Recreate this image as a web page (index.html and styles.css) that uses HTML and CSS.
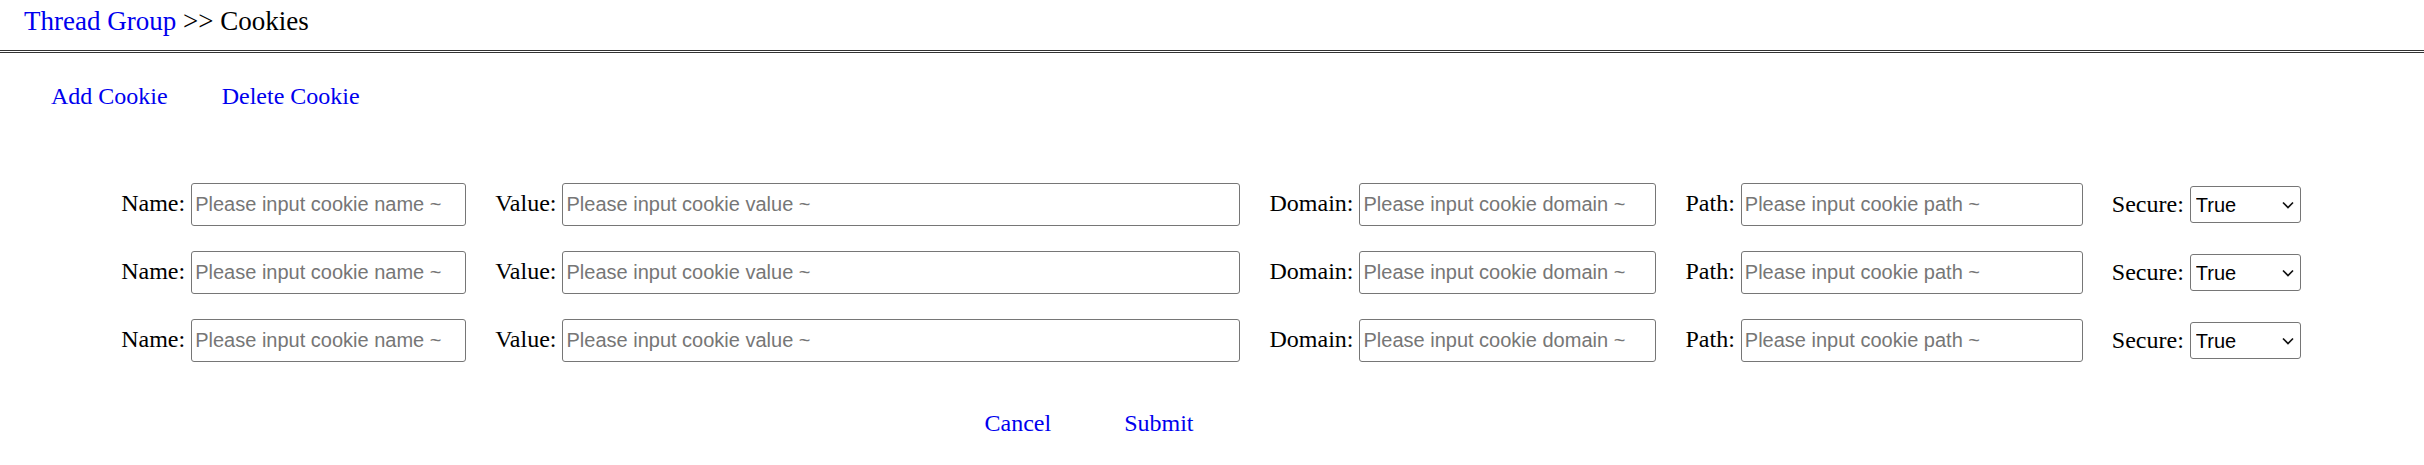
FILE: index.html
```html
<!DOCTYPE html>
<html>
<head>
<meta charset="utf-8">
<title>Cookies</title>
<link rel="stylesheet" href="styles.css">
</head>
<body>
<div class="header">
  <a class="crumb" href="#">Thread Group</a> &gt;&gt; Cookies
</div>
<div class="toolbar">
  <a class="link" href="#">Add Cookie</a>
  <a class="link" href="#">Delete Cookie</a>
</div>
<form class="cookies">
  <div class="row">
    <label class="field"><span class="lbl">Name:</span><input class="inp inp-name" type="text" placeholder="Please input cookie name ~"></label>
    <label class="field"><span class="lbl">Value:</span><input class="inp inp-value" type="text" placeholder="Please input cookie value ~"></label>
    <label class="field"><span class="lbl">Domain:</span><input class="inp inp-domain" type="text" placeholder="Please input cookie domain ~"></label>
    <label class="field"><span class="lbl">Path:</span><input class="inp inp-path" type="text" placeholder="Please input cookie path ~"></label>
    <label class="field"><span class="lbl">Secure:</span><span class="sel-wrap"><select class="sel"><option>True</option><option>False</option></select><svg class="chev" width="12" height="8" viewBox="0 0 12 8"><path d="M1 1.5 L6 6.5 L11 1.5" fill="none" stroke="#111" stroke-width="1.7"/></svg></span></label>
  </div>
  <div class="row">
    <label class="field"><span class="lbl">Name:</span><input class="inp inp-name" type="text" placeholder="Please input cookie name ~"></label>
    <label class="field"><span class="lbl">Value:</span><input class="inp inp-value" type="text" placeholder="Please input cookie value ~"></label>
    <label class="field"><span class="lbl">Domain:</span><input class="inp inp-domain" type="text" placeholder="Please input cookie domain ~"></label>
    <label class="field"><span class="lbl">Path:</span><input class="inp inp-path" type="text" placeholder="Please input cookie path ~"></label>
    <label class="field"><span class="lbl">Secure:</span><span class="sel-wrap"><select class="sel"><option>True</option><option>False</option></select><svg class="chev" width="12" height="8" viewBox="0 0 12 8"><path d="M1 1.5 L6 6.5 L11 1.5" fill="none" stroke="#111" stroke-width="1.7"/></svg></span></label>
  </div>
  <div class="row">
    <label class="field"><span class="lbl">Name:</span><input class="inp inp-name" type="text" placeholder="Please input cookie name ~"></label>
    <label class="field"><span class="lbl">Value:</span><input class="inp inp-value" type="text" placeholder="Please input cookie value ~"></label>
    <label class="field"><span class="lbl">Domain:</span><input class="inp inp-domain" type="text" placeholder="Please input cookie domain ~"></label>
    <label class="field"><span class="lbl">Path:</span><input class="inp inp-path" type="text" placeholder="Please input cookie path ~"></label>
    <label class="field"><span class="lbl">Secure:</span><span class="sel-wrap"><select class="sel"><option>True</option><option>False</option></select><svg class="chev" width="12" height="8" viewBox="0 0 12 8"><path d="M1 1.5 L6 6.5 L11 1.5" fill="none" stroke="#111" stroke-width="1.7"/></svg></span></label>
  </div>
</form>
<div class="actions">
  <a class="link" href="#">Cancel</a>
  <a class="link" href="#">Submit</a>
</div>
</body>
</html>
```
FILE: styles.css
```css
html, body {
  margin: 0;
  padding: 0;
  background: #fff;
}
body {
  font-family: "Liberation Serif", "Times New Roman", serif;
  color: #000;
}
a {
  text-decoration: none;
}
.header {
  font-size: 27px;
  line-height: 36px;
  padding: 3px 24px 11px;
  border-bottom: 3px double #333;
}
.crumb {
  color: #0000ee;
}
.toolbar {
  display: flex;
  gap: 54px;
  padding-left: 51px;
  margin-top: 27px;
  font-size: 24px;
  line-height: 32px;
}
.link {
  color: #0000ee;
}
.cookies {
  margin: 71px 0 0;
  display: flex;
  flex-direction: column;
  gap: 25px;
}
.row {
  display: flex;
  justify-content: center;
  align-items: center;
  gap: 29px;
  height: 43px;
  padding-right: 2px;
}
.field {
  display: flex;
  align-items: baseline;
  gap: 6px;
  font-size: 24px;
}
.inp {
  box-sizing: border-box;
  height: 43px;
  padding: 0 3px;
  border: 1px solid #767676;
  border-radius: 3px;
  font-family: "Liberation Sans", Arial, sans-serif;
  font-size: 20px;
  color: #000;
  background: #fff;
  outline: none;
}
.inp::placeholder {
  color: #767676;
}
.inp-name { width: 275px; }
.inp-value { width: 678px; }
.inp-domain { width: 297px; }
.inp-path { width: 342px; }
.sel-wrap {
  position: relative;
  display: inline-block;
}
.sel {
  -webkit-appearance: none;
  appearance: none;
  box-sizing: border-box;
  width: 111px;
  height: 37px;
  padding: 0 5px;
  border: 1px solid #767676;
  border-radius: 3px;
  background: #fff;
  font-family: "Liberation Sans", Arial, sans-serif;
  font-size: 20px;
  color: #000;
}
.chev {
  position: absolute;
  right: 7px;
  top: 50%;
  margin-top: -4px;
  pointer-events: none;
}
.actions {
  display: flex;
  justify-content: center;
  gap: 73px;
  margin-top: 45px;
  padding-right: 246px;
  font-size: 24px;
  line-height: 32px;
}
```
